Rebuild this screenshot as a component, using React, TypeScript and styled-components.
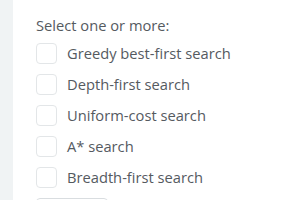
import styled, { createGlobalStyle } from "styled-components";

const GlobalStyle = createGlobalStyle`
  html, body {
    margin: 0;
    padding: 0;
    background: #ffffff;
  }
  body {
    font-family: "Open Sans", "Liberation Sans", sans-serif;
  }
`;

const options = [
  "Greedy best-first search",
  "Depth-first search",
  "Uniform-cost search",
  "A* search",
  "Breadth-first search",
];

const App = () => {
  return (
    <>
      <GlobalStyle />
      <Page>
        <Sidebar />
        <Content>
          <Prompt>Select one or more:</Prompt>
          <OptionList>
            {options.map((label) => (
              <Option key={label}>
                <Box type="checkbox" />
                <Label>{label}</Label>
              </Option>
            ))}
          </OptionList>
          {/* only the top edge of the submit button shows in the frame */}
          <SubmitButton type="button" aria-label="Check" />
        </Content>
      </Page>
    </>
  );
};

const Page = styled.div`
  display: flex;
  width: 285px;
  height: 200px;
  overflow: hidden;
`;

const Sidebar = styled.div`
  width: 13px;
  flex: 0 0 auto;
  background: #f0f3f4;
`;

const Content = styled.div`
  flex: 1;
  padding: 14px 0 0 23px;
  color: #555a5f;
`;

const Prompt = styled.div`
  font-size: 14.7px;
  line-height: 22px;
  margin-bottom: 7px;
`;

const OptionList = styled.div`
  display: flex;
  flex-direction: column;
  gap: 10px;
`;

const Option = styled.label`
  display: flex;
  align-items: center;
  gap: 10px;
  height: 21px;
`;

const Box = styled.input`
  appearance: none;
  margin: 0;
  width: 21px;
  height: 21px;
  border: 1px solid #e3e6e8;
  border-radius: 4px;
  background: #ffffff;
`;

const Label = styled.span`
  font-size: 14.7px;
  line-height: 21px;
`;

const SubmitButton = styled.button`
  display: block;
  margin-top: 10px;
  width: 72px;
  height: 30px;
  border: 1px solid #d9dde0;
  border-radius: 4px;
  background: #ffffff;
`;

export default App;
